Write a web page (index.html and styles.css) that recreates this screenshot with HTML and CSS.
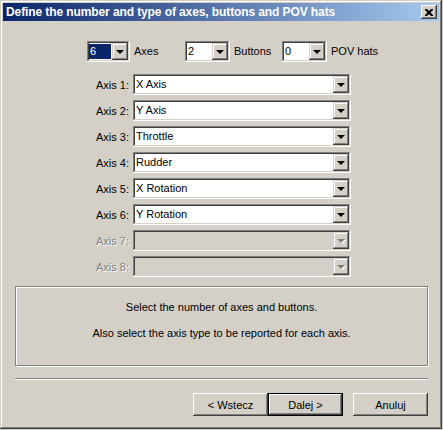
FILE: index.html
```html
<!DOCTYPE html>
<html>
<head>
<meta charset="utf-8">
<link rel="stylesheet" href="styles.css">
</head>
<body>
<div class="window">
  <div class="titlebar">
    <span class="title">Define the number and type of axes, buttons and POV hats</span>
    <span class="close"><svg width="8" height="7" viewBox="0 0 8 7"><path d="M0 0h2l2 2 2-2h2v1l-2.5 2.5L8 6v1H6L4 5 2 7H0V6l2.5-2.5L0 1z" fill="#000"/></svg></span>
  </div>

  <div class="toprow">
    <div class="group g1">
      <div class="combo small"><span class="val selected">6</span><span class="drop"><i class="arrow"></i></span></div>
      <span class="lbl">Axes</span>
    </div>
    <div class="group g2">
      <div class="combo small"><span class="val">2</span><span class="drop"><i class="arrow"></i></span></div>
      <span class="lbl">Buttons</span>
    </div>
    <div class="group g3">
      <div class="combo small"><span class="val">0</span><span class="drop"><i class="arrow"></i></span></div>
      <span class="lbl">POV hats</span>
    </div>
  </div>

  <div class="axes">
    <div class="axis"><span class="alabel">Axis 1:</span><div class="combo wide"><span class="val">X Axis</span><span class="drop"><i class="arrow"></i></span></div></div>
    <div class="axis"><span class="alabel">Axis 2:</span><div class="combo wide"><span class="val">Y Axis</span><span class="drop"><i class="arrow"></i></span></div></div>
    <div class="axis"><span class="alabel">Axis 3:</span><div class="combo wide"><span class="val">Throttle</span><span class="drop"><i class="arrow"></i></span></div></div>
    <div class="axis"><span class="alabel">Axis 4:</span><div class="combo wide"><span class="val">Rudder</span><span class="drop"><i class="arrow"></i></span></div></div>
    <div class="axis"><span class="alabel">Axis 5:</span><div class="combo wide"><span class="val">X Rotation</span><span class="drop"><i class="arrow"></i></span></div></div>
    <div class="axis"><span class="alabel">Axis 6:</span><div class="combo wide"><span class="val">Y Rotation</span><span class="drop"><i class="arrow"></i></span></div></div>
    <div class="axis disabled"><span class="alabel">Axis 7:</span><div class="combo wide"><span class="val"></span><span class="drop"><i class="arrow"></i></span></div></div>
    <div class="axis disabled"><span class="alabel">Axis 8:</span><div class="combo wide"><span class="val"></span><span class="drop"><i class="arrow"></i></span></div></div>
  </div>

  <div class="info">
    <p>Select the number of axes and buttons.</p>
    <p>Also select the axis type to be reported for each axis.</p>
  </div>

  <div class="separator"></div>

  <div class="buttons">
    <button class="btn">&lt; Wstecz</button>
    <button class="btn default">Dalej &gt;</button>
    <button class="btn cancel">Anuluj</button>
  </div>
</div>
</body>
</html>
```
FILE: styles.css
```css
html, body {
  margin: 0;
  padding: 0;
  background: #d4d0c8;
}
body {
  font-family: "Liberation Sans", Arial, sans-serif;
  font-size: 11px;
  color: #000;
}
.window {
  width: 442px;
  height: 429px;
  box-sizing: border-box;
  padding: 3px;
  background: #d4d0c8;
  box-shadow: inset -1px -1px #404040, inset 1px 1px #d4d0c8, inset -2px -2px #808080, inset 2px 2px #ffffff;
  display: flex;
  flex-direction: column;
}
.titlebar {
  height: 18px;
  background: linear-gradient(to right, #0a246a, #a6caf0);
  display: flex;
  align-items: center;
  justify-content: space-between;
  padding: 0 2px 0 3px;
}
.title {
  color: #fff;
  font-weight: bold;
  font-size: 12px;
  font-family: "Liberation Sans", Arial, sans-serif;
  letter-spacing: -0.1px;
}
.close {
  width: 16px;
  height: 14px;
  box-sizing: border-box;
  background: #d4d0c8;
  box-shadow: inset -1px -1px #404040, inset 1px 1px #fff, inset -2px -2px #808080;
  display: flex;
  align-items: center;
  justify-content: center;
}
.close svg { display: block; margin-left: -1px; }

/* combos */
.combo {
  height: 21px;
  box-sizing: border-box;
  padding: 2px;
  background: #fff;
  box-shadow: inset -1px -1px #fff, inset 1px 1px #808080, inset -2px -2px #d4d0c8, inset 2px 2px #404040;
  display: flex;
  align-items: stretch;
}
.combo .val {
  flex: 1;
  padding-left: 1px;
  line-height: 17px;
  white-space: nowrap;
  overflow: hidden;
}
.combo .val.selected {
  background: #0a246a;
  color: #fff;
  margin: 1px 1px 1px 0;
  line-height: 15px;
}
.drop {
  width: 16px;
  background: #d4d0c8;
  box-shadow: inset -1px -1px #404040, inset 1px 1px #d4d0c8, inset -2px -2px #808080, inset 2px 2px #fff;
  display: flex;
  align-items: center;
  justify-content: center;
}
.arrow {
  width: 0;
  height: 0;
  border-left: 4px solid transparent;
  border-right: 4px solid transparent;
  border-top: 4px solid #000;
  margin-top: 1px;
}
.combo.small { width: 43px; }
.combo.wide { width: 218px; }

/* top row */
.toprow {
  display: flex;
  margin-top: 20px;
  padding-left: 84px;
}
.group {
  display: flex;
  align-items: center;
  gap: 4px;
}
.g1 { width: 98px; }
.g2 { width: 97px; }
.g2 .combo.small { width: 45px; }
.g3 .combo.small { width: 45px; }
.lbl { line-height: 21px; }

/* axis rows */
.axes {
  margin-top: 12px;
  display: flex;
  flex-direction: column;
  gap: 5px;
}
.axis {
  display: flex;
  align-items: center;
  gap: 4px;
}
.alabel {
  width: 126px;
  text-align: right;
}
.axis.disabled .alabel {
  color: #808080;
  text-shadow: 1px 1px 0 #fff;
}
.axis.disabled .combo { background: #d4d0c8; }
.axis.disabled .arrow {
  border-top-color: #808080;
  filter: drop-shadow(1px 1px 0 #fff);
}

/* info panel */
.info {
  margin: 9px 0 0 12px;
  width: 413px;
  height: 80px;
  box-sizing: border-box;
  border: 1px solid #808080;
  box-shadow: 1px 1px 0 #fff, inset 1px 1px 0 #fff;
  text-align: center;
  padding-top: 14px;
}
.info p {
  margin: 0 0 13px 0;
  line-height: 13px;
}

.separator {
  margin: 12px 0 0 12px;
  width: 413px;
  height: 1px;
  background: #808080;
  border-bottom: 1px solid #fff;
}

/* buttons */
.buttons {
  display: flex;
  margin-top: 13px;
  padding-left: 190px;
}
.btn {
  width: 75px;
  height: 23px;
  box-sizing: border-box;
  font-family: "Liberation Sans", Arial, sans-serif;
  font-size: 11px;
  color: #000;
  background: #d4d0c8;
  border: none;
  padding: 0;
  box-shadow: inset -1px -1px #404040, inset 1px 1px #fff, inset -2px -2px #808080, inset 2px 2px #d4d0c8;
}
.btn.default {
  border: 1px solid #000;
  box-shadow: inset -1px -1px #404040, inset 1px 1px #fff, inset -2px -2px #808080, inset 2px 2px #d4d0c8;
}
.btn.cancel { margin-left: 10px; }
```
